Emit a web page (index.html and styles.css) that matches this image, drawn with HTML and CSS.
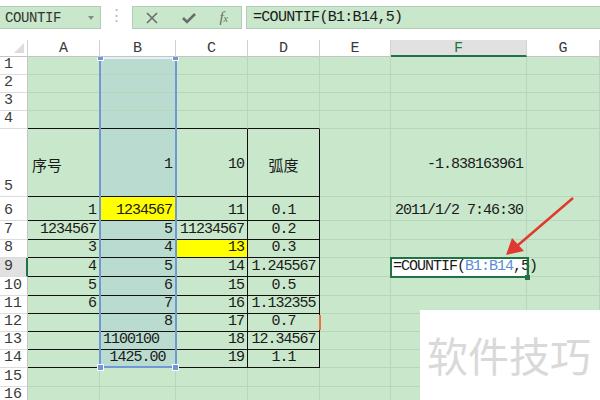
FILE: index.html
```html
<!DOCTYPE html>
<html lang="zh-CN">
<head>
    <meta charset="UTF-8">
    <title>COUNTIF</title>
    <link rel="stylesheet" href="styles.css">
</head>
<body>
    <div class="toolbar">
        <div class="namebox">
            <span>COUNTIF</span>
            <span class="caret"></span>
        </div>
        <div class="sep">⋮</div>
        <div class="fnbtns">
            <svg width="14" height="14" viewBox="0 0 14 14"><path d="M2 2 L12 12 M12 2 L2 12" stroke="#6b6b6b" stroke-width="1.6" fill="none"/></svg>
            <svg width="16" height="14" viewBox="0 0 16 14"><path d="M2 7 L6 11 L14 3" stroke="#6b6b6b" stroke-width="2.6" fill="none"/></svg>
            <span class="fx">f<small>x</small></span>
        </div>
        <div class="formula">=COUNTIF(B1:B14,5)</div>
    </div>

    <div class="sheet" id="sheet">
        <div class="selection">
            <span class="handle h-tl"></span>
            <span class="handle h-tr"></span>
            <span class="handle h-bl"></span>
            <span class="handle h-br"></span>
        </div>
        <div class="edit-box"><span class="edit-handle"></span></div>
        <span class="note-mark"></span>
        <svg class="arrow" width="600" height="400" viewBox="0 0 600 400">
            <line x1="573" y1="198" x2="517" y2="246" stroke="#e0392f" stroke-width="2.5"/>
            <polygon points="506,255 512,238 524,251" fill="#e0392f"/>
        </svg>
        <div class="watermark">软件技巧</div>
    </div>

    <script>
        const cols = ['A', 'B', 'C', 'D', 'E', 'F', 'G'];
        // [text, align + extra classes]
        const data = {
            5: [['序号', 'l cn'], ['1', 'r'], ['10', 'r'], ['弧度', 'c cn'], null, ['-1.838163961', 'r']],
            6: [['1', 'r'], ['1234567', 'r yellow'], ['11', 'r'], ['0.1', 'c'], null, ['2011/1/2 7:46:30', 'r']],
            7: [['1234567', 'r'], ['5', 'r'], ['11234567', 'r'], ['0.2', 'c']],
            8: [['3', 'r'], ['4', 'r'], ['13', 'r yellow'], ['0.3', 'c']],
            9: [['4', 'r'], ['5', 'r'], ['14', 'r'], ['1.245567', 'c'], null, ['edit', 'l editing']],
            10: [['5', 'r'], ['6', 'r'], ['15', 'r'], ['0.5', 'c']],
            11: [['6', 'r'], ['7', 'r'], ['16', 'r'], ['1.132355', 'c']],
            12: [null, ['8', 'r'], ['17', 'r'], ['0.7', 'c']],
            13: [null, ['1100100', 'l'], ['18', 'r'], ['12.34567', 'c']],
            14: [null, ['1425.00', 'c'], ['19', 'r'], ['1.1', 'c']]
        };

        const sheet = document.getElementById('sheet');

        function addCell(cls, html) {
            const cell = document.createElement('div');
            cell.className = cls;
            cell.innerHTML = html || '';
            sheet.appendChild(cell);
        }

        addCell('corner', '<span class="tri"></span>');
        cols.forEach(c => addCell('colhead' + (c === 'F' ? ' active' : ''), c));

        for (let r = 1; r <= 16; r++) {
            addCell('rowhead' + (r === 9 ? ' active' : ''), r);
            cols.forEach((c, i) => {
                let cls = 'cell';
                if (r === 5) cls += ' mid';
                if (c === 'B' && r <= 14) cls += ' sel';
                if (i < 4 && r >= 5 && r <= 14) cls += ' tb';
                if (i < 4 && r === 4) cls += ' tt';
                const item = data[r] && data[r][i];
                let html = '';
                if (item) {
                    cls += ' ' + item[1];
                    html = item[0] === 'edit'
                        ? '<span>=COUNTIF(<b>B1:B14</b>,5)</span><i class="caret-line"></i>'
                        : item[0];
                }
                addCell(cls, html);
            });
        }
    </script>
</body>
</html>
```

FILE: styles.css
```css
:root {
    --sheet-green: #c9e7cb;
    --sel-green: #badbcf;
    --grid-line: #b9d5bc;
    --header-line: #d2d2d2;
    --excel-green: #217346;
    --sel-blue: #7197d6;
    --text: #1a1a1a;
}

body {
    margin: 0;
    width: 600px;
    height: 400px;
    overflow: hidden;
    background: #ffffff;
    font-family: "Liberation Mono", "Noto Sans CJK SC", monospace;
    color: var(--text);
}

/* formula bar */
.toolbar {
    display: flex;
    align-items: flex-start;
    height: 40px;
    padding-top: 6px;
    box-sizing: border-box;
}

.namebox, .fnbtns, .formula {
    height: 23px;
    box-sizing: border-box;
    background: var(--sheet-green);
    border: 1px solid #b3cdb5;
    display: flex;
    align-items: center;
}

.namebox {
    width: 101px;
    border-left: none;
    padding: 0 6px 0 5px;
    justify-content: space-between;
    font-size: 14px;
    letter-spacing: -0.4px;
    color: #333;
}

.caret {
    width: 0;
    height: 0;
    border-left: 3px solid transparent;
    border-right: 3px solid transparent;
    border-top: 4px solid #8a8a8a;
}

.sep {
    width: 31px;
    text-align: center;
    color: #b5b5b5;
    font-size: 15px;
    line-height: 22px;
}

.fnbtns {
    width: 110px;
    justify-content: space-between;
    padding: 0 13px 0 12px;
}

.fx {
    font-family: "Liberation Serif", serif;
    font-style: italic;
    font-size: 15px;
    color: #6b6b6b;
}

.fx small {
    font-size: 10px;
}

.formula {
    flex: 1;
    margin-left: 4px;
    border-right: none;
    padding-left: 6px;
    font-size: 15px;
    letter-spacing: -0.7px;
}

/* sheet */
.sheet {
    position: relative;
    display: grid;
    grid-template-columns: 28px 72px 76px 72px 72px 71px 136px 73px;
    grid-template-rows: 17px 18px 18px 18px 18px 68px 24px 19px 18px 19px 19px 18px 18px 18px 18px 19px 18px;
    font-size: 15px;
    line-height: 16px;
}

.corner, .colhead, .rowhead {
    background: #ffffff;
    color: #3a3a3a;
    box-sizing: border-box;
}

.corner {
    position: relative;
    border-right: 1px solid var(--header-line);
    border-bottom: 1px solid #c4c4c4;
}

.tri {
    position: absolute;
    right: 3px;
    bottom: 3px;
    width: 0;
    height: 0;
    border-left: 10px solid transparent;
    border-bottom: 10px solid #dcdcdc;
}

.colhead {
    text-align: center;
    border-right: 1px solid var(--header-line);
    border-bottom: 1px solid #c4c4c4;
    line-height: 17px;
}

.colhead.active {
    background: #e1e1e1;
    color: var(--excel-green);
    border-bottom: 2px solid var(--excel-green);
}

.rowhead {
    display: flex;
    align-items: flex-end;
    padding: 0 0 1px 4px;
    border-right: 1px solid #c4c4c4;
    border-bottom: 1px solid #dcdcdc;
}

.rowhead.active {
    background: #e1e1e1;
    border-right: 2px solid var(--excel-green);
}

.cell {
    display: flex;
    align-items: flex-end;
    padding: 0 3px 1px;
    box-sizing: border-box;
    background: var(--sheet-green);
    border-right: 1px solid var(--grid-line);
    border-bottom: 1px solid var(--grid-line);
    white-space: nowrap;
    letter-spacing: -1px;
}

.cell.mid {
    align-items: center;
    padding-top: 6px;
}

.cell.r { justify-content: flex-end; }
.cell.c { justify-content: center; }
.cell.l { justify-content: flex-start; }

.cell.sel { background: var(--sel-green); }
.cell.yellow { background: #ffff00; }

.cell.tb {
    border-right-color: #111;
    border-bottom-color: #111;
}

.cell.tt {
    border-bottom-color: #111;
}

.cell.cn {
    font-family: "Noto Sans CJK SC", sans-serif;
    letter-spacing: 0;
    font-size: 15px;
}

.cell.l.cn {
    padding-left: 4px;
}

.cell.editing {
    position: relative;
    z-index: 2;
    overflow: visible;
    padding-left: 2px;
    background: transparent;
}

.cell.editing b {
    font-weight: normal;
    color: #5a8fd6;
}

.caret-line {
    display: inline-block;
    width: 1px;
    height: 16px;
    margin-left: 3px;
    background: #000;
}

/* overlays */
.selection {
    position: absolute;
    left: 99px;
    top: 17px;
    width: 78px;
    height: 311px;
    box-sizing: border-box;
    border: 2px solid var(--sel-blue);
    border-top-color: #e8eef8;
    z-index: 3;
}

.handle {
    position: absolute;
    width: 7px;
    height: 7px;
    background: var(--sel-blue);
    border: 1px solid #ffffff;
    box-sizing: border-box;
}

.h-tl, .h-tr { top: -2px; height: 4px; border-top: none; }
.h-tl, .h-bl { left: -4px; }
.h-tr, .h-br { right: -4px; }
.h-bl, .h-br { bottom: -5px; }

.edit-box {
    position: absolute;
    left: 390px;
    top: 217px;
    width: 139px;
    height: 21px;
    box-sizing: border-box;
    border: 2px solid var(--excel-green);
    z-index: 3;
}

.edit-handle {
    position: absolute;
    right: -3px;
    bottom: -4px;
    width: 5px;
    height: 5px;
    background: var(--excel-green);
}

.note-mark {
    position: absolute;
    left: 319px;
    top: 275px;
    width: 2px;
    height: 15px;
    background: #e8743b;
    z-index: 3;
}

.arrow {
    position: absolute;
    left: 0;
    top: -40px;
    z-index: 4;
    pointer-events: none;
}

.watermark {
    position: absolute;
    left: 420px;
    top: 270px;
    width: 180px;
    height: 90px;
    box-sizing: border-box;
    padding: 22px 0 0 7px;
    background: #ffffff;
    color: #d9d9d9;
    font-family: "Noto Sans CJK SC", sans-serif;
    font-size: 41px;
    line-height: 44px;
    letter-spacing: 0;
    z-index: 5;
}
```
